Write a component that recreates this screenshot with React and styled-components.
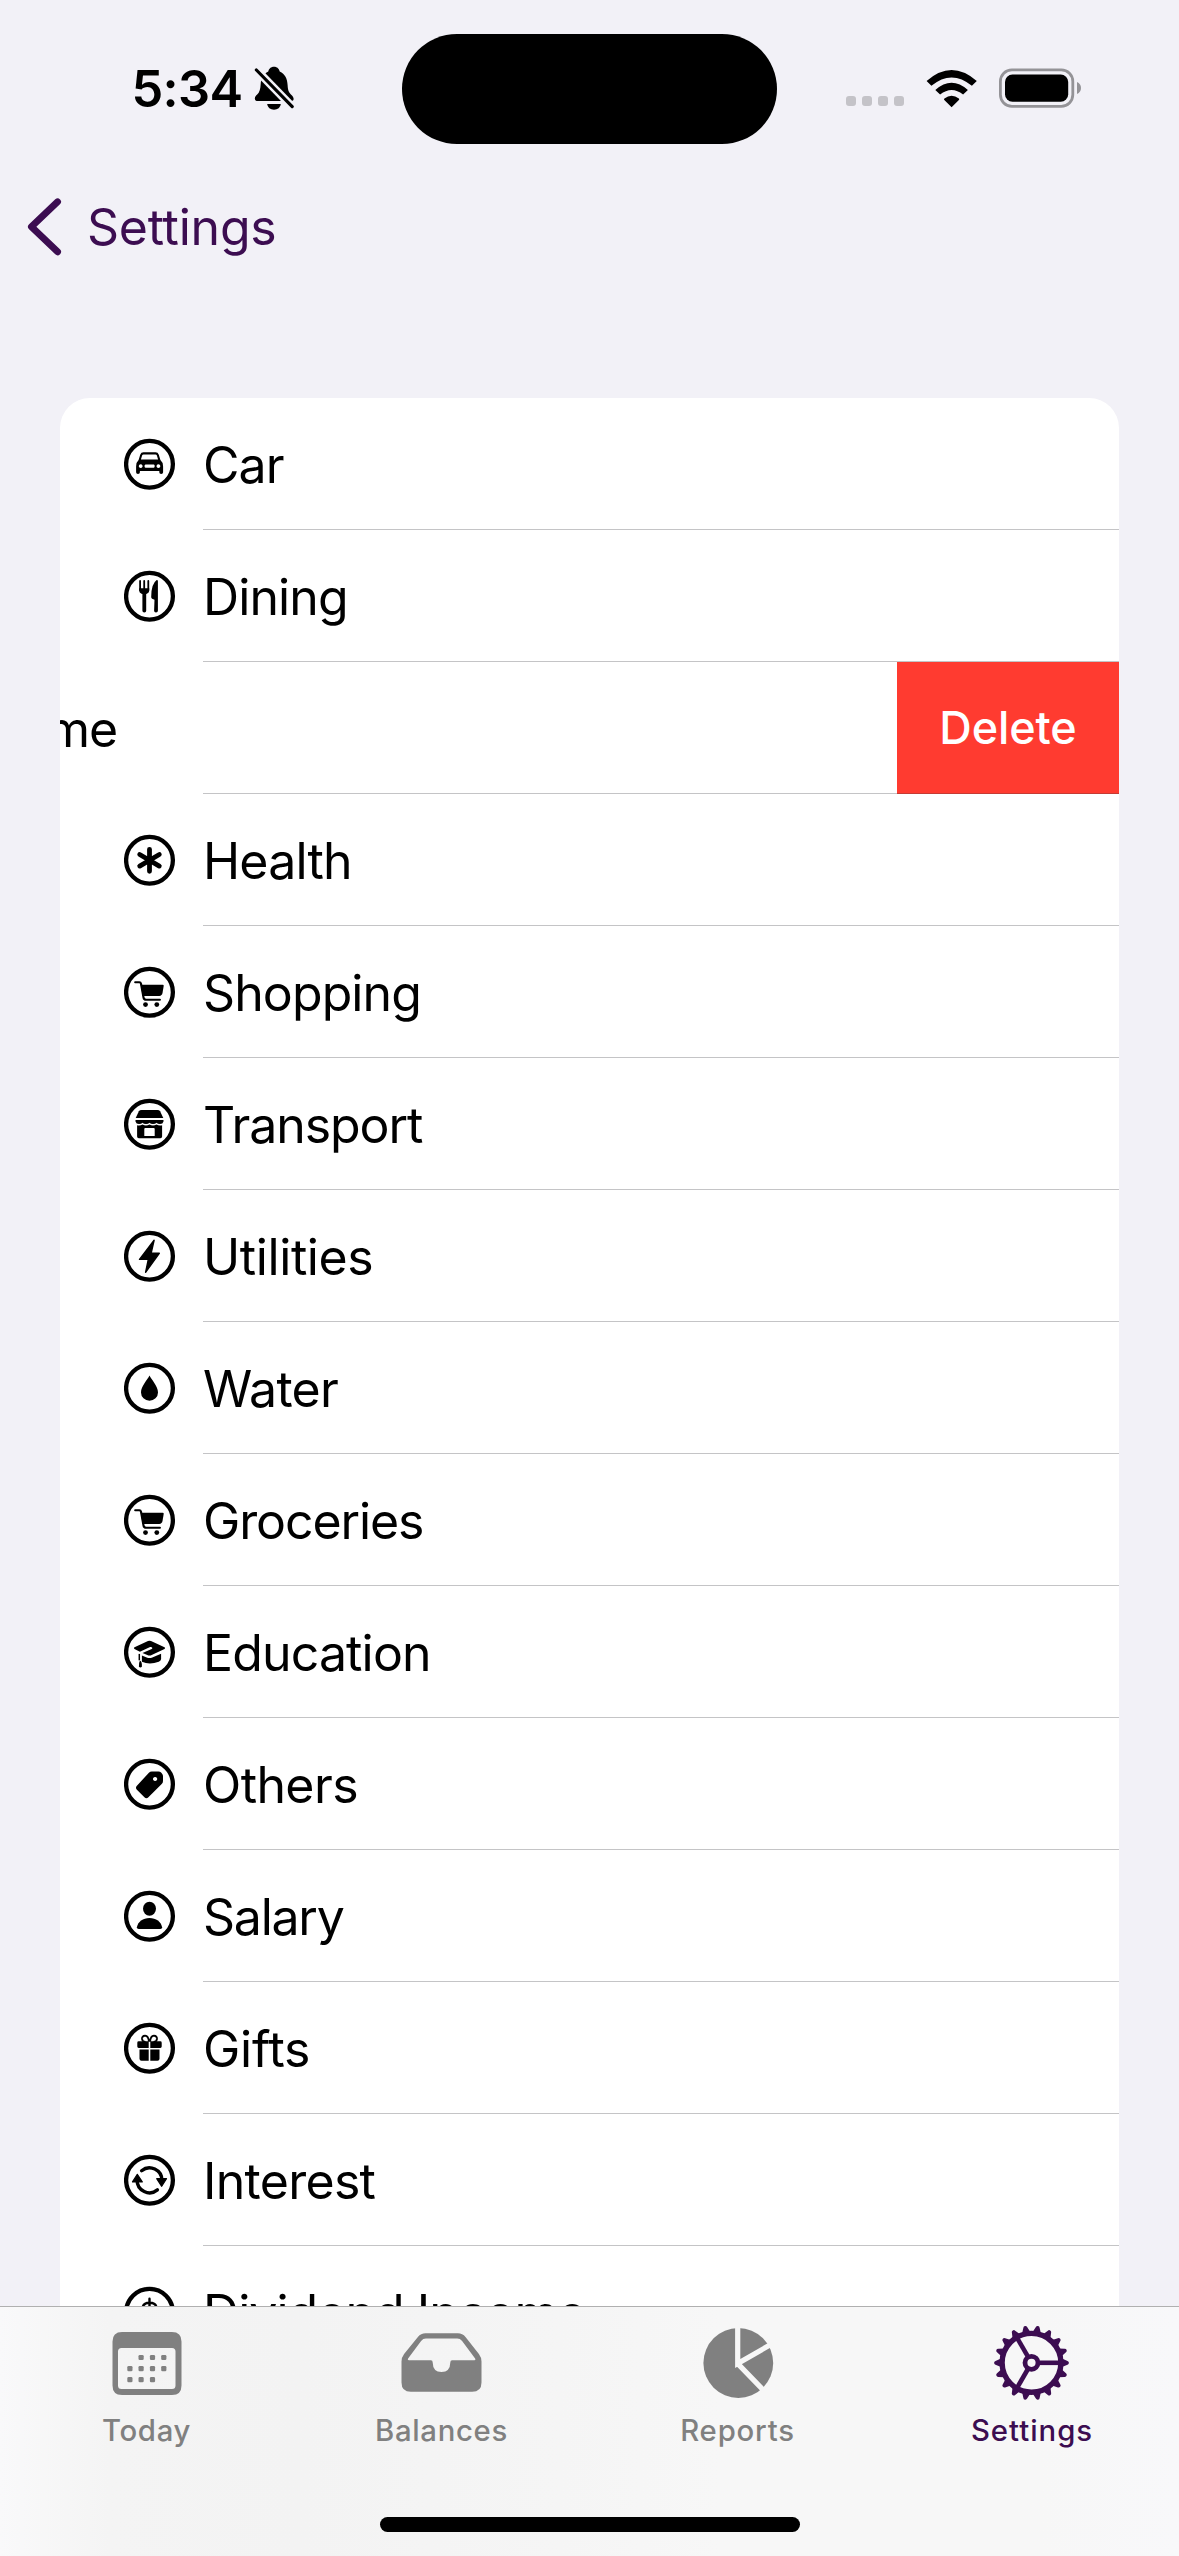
import React from 'react';
import styled, { createGlobalStyle } from 'styled-components';

const PURPLE = '#3c0d51';
const GREY = '#808080';

const GlobalStyle = createGlobalStyle`
  *, *::before, *::after { box-sizing: border-box; }
  html, body { margin: 0; padding: 0; }
  body {
    background: #f2f1f7;
    font-family: Inter, Roboto, "Liberation Sans", sans-serif;
    color: #000;
  }
  svg { display: block; }
`;

const Screen = styled.div`
  width: 1179px;
  height: 2556px;
  display: flex;
  flex-direction: column;
  overflow: hidden;
  background: #f2f1f7;
`;

const StatusBar = styled.header`
  flex: none;
  height: 177px;
  padding-top: 34px;
  display: grid;
  grid-template-columns: 402px 375px 402px;
  align-items: start;
`;

const StatusLeft = styled.div`
  display: flex;
  align-items: center;
  height: 110px;
  padding-left: 131.5px;
`;

const Time = styled.span`
  width: 122.5px;
  flex: none;
  font-size: 50.5px;
  font-weight: 600;
  letter-spacing: -0.7px;
  line-height: 60px;
  white-space: nowrap;
`;

const Island = styled.div`
  height: 110px;
  border-radius: 55px;
  background: #000;
`;

const StatusRight = styled.div`
  display: flex;
  align-items: center;
  height: 110px;
  padding-left: 69px;
`;

const Dots = styled.div`
  display: flex;
  gap: 6px;
  margin: 24px 22px 0 0;
`;

const Dot = styled.i`
  width: 10px;
  height: 10px;
  border-radius: 3px;
  background: #c4c3c8;
`;

const WifiSvg = styled.svg`
  margin-top: -3px;
`;

const BatterySvg = styled.svg`
  margin: -2px 0 0 21px;
`;

const NavBar = styled.nav`
  flex: none;
  height: 221px;
  padding-left: 25px;
  display: flex;
  align-items: flex-start;
`;

const BackButton = styled.button`
  display: flex;
  align-items: center;
  gap: 22px;
  height: 100px;
  border: 0;
  padding: 0;
  background: none;
  font: inherit;
  color: ${PURPLE};
`;

const BackLabel = styled.span`
  font-size: 50px;
  line-height: 60px;
  letter-spacing: -0.25px;
`;

const ListArea = styled.main`
  flex: 1;
  min-height: 0;
  overflow: hidden;
  padding: 0 60px;
`;

const Card = styled.ul`
  list-style: none;
  margin: 0;
  padding: 0;
  background: #fff;
  border-radius: 30px 30px 0 0;
  overflow: hidden;
`;

const Row = styled.li`
  position: relative;
  display: flex;
  height: 132px;
  &::after {
    content: '';
    position: absolute;
    left: 143px;
    right: 0;
    bottom: 0;
    height: 1px;
    background: rgba(60, 60, 67, 0.3);
  }
`;

const RowContent = styled.div`
  flex: none;
  width: 1059px;
  margin-left: ${(p) => (p.$swiped ? '-222px' : '0')};
  padding-left: 64px;
  display: flex;
  align-items: center;
  gap: 27px;
`;

const IconSvg = styled.svg`
  flex: none;
`;

const RowLabel = styled.span`
  padding-top: 2px;
  font-size: 50px;
  line-height: 60px;
  letter-spacing: ${(p) => p.$tracking}px;
  white-space: nowrap;
`;

const DeleteButton = styled.button`
  flex: none;
  width: 222px;
  border: 0;
  padding: 0 0 2px;
  background: #ff3b30;
  color: #fff;
  font: inherit;
  font-size: 45px;
  font-weight: 450;
  letter-spacing: -0.1px;
`;

const TabBar = styled.footer`
  flex: none;
  height: 250px;
  border-top: 1px solid #b0b0b0;
  background: linear-gradient(90deg, #f9f9fa 0, #f4f4f4 110px, #f3f3f3 300px, #f5f5f5 560px, #f7f7f7 720px, #f7f7f7 1040px, #f8f8fa 1179px);
  display: flex;
  flex-direction: column;
  align-items: center;
`;

const Tabs = styled.div`
  width: 100%;
  height: 210px;
  display: grid;
  grid-template-columns: 293px 297px 295px 294px;
`;

const Tab = styled.div`
  display: flex;
  flex-direction: column;
  align-items: center;
  padding-top: 17px;
  color: ${(p) => (p.$active ? PURPLE : GREY)};
`;

const TabLabel = styled.span`
  margin-top: 11px;
  font-size: 29.3px;
  line-height: 36px;
  font-weight: 500;
  letter-spacing: ${(p) => p.$tracking}px;
`;

const HomeIndicator = styled.div`
  width: 420px;
  height: 15px;
  border-radius: 8px;
  background: #000;
`;

const Cart = () => (
  <g>
    <path d="M-14.3-10h4.2q1.3 0 1.6 1.4L-6 5.2q.4 2.3 2.6 2.3H10.4" fill="none" stroke="#000" strokeWidth="2.1" strokeLinecap="round" />
    <path d="M-8.8-7.5H13.2q1.2 0 1 1.2L13 .8Q12.5 3.6 9.8 3.6H-6.8z" />
    <circle cx="-4" cy="12.3" r="2.4" />
    <circle cx="7.3" cy="12.3" r="2.4" />
  </g>
);

const glyphs = {
  car: (
    <path
      fillRule="evenodd"
      d="M-13.4 2.2Q-13.4-2-10.9-4.2L-9.3-9.6Q-8.5-12-6-12H6Q8.5-12 9.3-9.6L10.9-4.2Q13.6-2 13.6 2.2V8Q13.6 9.7 11.7 9.7T9.8 8V6.6H-9.6V8Q-9.6 9.7-11.5 9.7T-13.4 8ZM-8.6-4.7H8.6L7.3-9Q7-9.8 6-9.8H-6Q-7-9.8-7.3-9ZM-8.8-.1a1.9 1.9 0 1 0 .01 0ZM8.9-.1a1.9 1.9 0 1 0 .01 0ZM-4 .3Q-5 .3-5 1.8T-4 3.4H4.2Q5.2 3.4 5.2 1.8T4.2 .3Z"
    />
  ),
  dining: (
    <g>
      <path d="M-9.4-15.3V-6M-5.3-15.3V-6M-1.2-15.3V-6" stroke="#000" strokeWidth="1.8" strokeLinecap="round" />
      <path d="M-10.3-8H-.3V-5.5Q-.3-3.3-2.6-2.6L-3.3-2.2V14.5Q-3.3 16.2-5.2 16.2T-7.1 14.5V-2.2L-8-2.6Q-10.3-3.3-10.3-5.5Z" />
      <path d="M7.2-16.2Q8.4-16.4 8.4-15V14.5Q8.4 16.2 6.5 16.2T4.6 14.5L5 3.5 2.6 2.4Q1.7 2 1.7.8 1.7-12.5 7.2-16.2Z" />
    </g>
  ),
  health: <path d="M0-11V11M-9.8-5.8 9.8 5.8M-9.8 5.8 9.8-5.8" stroke="#000" strokeWidth="4.8" strokeLinecap="round" />,
  cart: <Cart />,
  store: (
    <g>
      <path d="M-8-14.3H8Q9.8-14.3 10.6-13L13.8-6.2H-13.8L-10.6-13Q-9.8-14.3-8-14.3Z" />
      <path d="M-14-4.4H14V-2.8Q13.4-.3 10.5-.3 8.2-.3 7-1.6 5.8-.3 3.5-.3T0-1.6Q-1.2-.3-3.5-.3T-7-1.6Q-8.2-.3-10.5-.3-13.4-.3-14-2.8Z" />
      <path fillRule="evenodd" d="M-12.4 1Q-9.3 1.6-7 .3-3.5 2.2 0 .3 3.5 2.2 7 .3 9.3 1.6 12.6 1V12.3Q12.6 14 10.9 14H-10.7Q-12.4 14-12.4 12.3ZM-5.2 4.6V11.8H5.2V4.6Q5.2 3.7 4.2 3.7H-4.2Q-5.2 3.7-5.2 4.6Z" />
    </g>
  ),
  bolt: <path d="M4.6-16 1.6-3H9.8L-3.9 16-1.2 3.1H-10Z" stroke="#000" strokeWidth="1.4" strokeLinejoin="round" />,
  drop: <path d="M0-12.7C2 -8.6 8.5-2 8.5 4.2A8.5 8.2 0 0 1-8.5 4.2C-8.5-2-2-8.6 0-12.7Z" />,
  education: (
    <g>
      <path d="M-1.5-11.3Q0-12 1.5-11.3L15-5Q16.4-4.2 15-3.4L2.2 2.6Q0 3.6-2.2 2.6L-7 .7 2.2-3.2Q3.2-3.8 2.6-4.8 1.8-5.6.6-5.2L-9.6-.6-15-3.4Q-16.4-4.2-15-5Z" />
      <path d="M-7.6 3.1-2.8 5.2Q0 6.4 2.8 5.2L11.6 1.4V6.8Q11.6 8.6 9.3 9.5 0 12.8-7.6 9.5Z" />
      <path d="M-10.2 1.6V8" stroke="#000" strokeWidth="1.5" />
      <path d="M-9.6 8.2Q-7.4 9-7.6 14.5-9.2 16-10.6 14.5-10.8 10.5-9.6 8.2Z" />
    </g>
  ),
  tag: <path fillRule="evenodd" d="M2.4-12.8H9Q10.5-12.8 11.6-11.7L12.4-10.9Q13.5-9.8 13.5-8.3V-3.4Q13.5-1.6 12.2-.3L-1.1 13Q-3.1 14.9-5.1 13L-12.6 5.4Q-14.5 3.4-12.6 1.4L-.6-11.5Q.6-12.8 2.4-12.8ZM5.6-7.4a2.1 2.1 0 1 0 .01 0Z" />,
  person: (
    <g>
      <ellipse cx="0" cy="-7.6" rx="6.5" ry="7" />
      <path d="M-10.8 12.8Q-12.8 12.8-12.6 11C-11.8 5.4-6.4 1.6 0 1.6S11.8 5.4 12.6 11Q12.8 12.8 10.8 12.8Z" />
    </g>
  ),
  gift: (
    <g>
      <path d="M-.6-6.5Q-1-12.4-4.4-12.6-7.6-12.4-7.5-9.4-7.2-6.5-4-6.3M.6-6.5Q1-12.4 4.4-12.6 7.6-12.4 7.5-9.4 7.2-6.5 4-6.3" fill="none" stroke="#000" strokeWidth="1.8" />
      <path d="M-10.8-7H-.8V-.4H-10.8Q-12.2-.4-12.2-1.8V-5.6Q-12.2-7-10.8-7ZM10.8-7H.8V-.4H10.8Q12.2-.4 12.2-1.8V-5.6Q12.2-7 10.8-7ZM-10 1.2H-.8V12.4H-8Q-10 12.4-10 10.4ZM10 1.2H.8V12.4H8Q10 12.4 10 10.4Z" />
    </g>
  ),
  cycle: (
    <g>
      <path d="M-7.9-9.6A12.4 12.4 0 0 1 12.4 0M7.9 9.6A12.4 12.4 0 0 1-12.4 0" fill="none" stroke="#000" strokeWidth="3.4" strokeLinecap="round" />
      <path d="M7.2-1.6H17L12.2 6Z M-7.2 1.6H-17L-12.2-6Z" stroke="#000" strokeWidth="1.2" strokeLinejoin="round" />
    </g>
  ),
  dollar: <path d="M0-13.5V13.5M6.8-5.5Q6-9.6 0-9.6T-6.8-5Q-6.8-1.4 0-.2 7.2 1 7.2 5T0 9.8Q-6.4 9.8-7 5" fill="none" stroke="#000" strokeWidth="2.4" strokeLinecap="round" />,
};

const CategoryIcon = ({ name }) => (
  <IconSvg width="52" height="52" viewBox="-25.5 -26.3 52 52">
    <circle cx="0" cy="0" r="23.4" fill="none" stroke="#000" strokeWidth="4.3" />
    {glyphs[name]}
  </IconSvg>
);

const BellSlash = () => (
  <svg width="40" height="46" viewBox="254 66 40 46">
    <defs>
      <mask id="bell-cut" maskUnits="userSpaceOnUse" x="250" y="60" width="50" height="55">
        <rect x="250" y="60" width="50" height="55" fill="#fff" />
        <path d="M252 65.4 297 111.6" stroke="#000" strokeWidth="8.2" />
      </mask>
    </defs>
    <g mask="url(#bell-cut)">
      <path d="M274 66.7C277.2 66.7 279.4 68.9 279.7 71.6 285 74 287.3 78.8 287.6 85 287.9 91 289 92.5 292 95.6 293.5 97.2 294 99 293.4 99.9 293 100.6 292 101 291 101H258C256 101 254.7 100 254.8 98.4 254.9 97 256 95.7 257.2 94.6 259.6 92.3 260.4 89 260.7 84 261 78.5 263.3 74 268.3 71.6 268.6 68.9 270.8 66.7 274 66.7Z" />
      <path d="M267.2 104H280.8C280.4 107.5 277.6 109.7 274 109.7S267.6 107.5 267.2 104Z" />
    </g>
    <path d="M256.4 70 292.2 106.6" stroke="#000" strokeWidth="3.2" strokeLinecap="round" />
  </svg>
);

const Wifi = () => (
  <WifiSvg width="52" height="40" viewBox="926 67 52 40">
    <path d="M951.6 106.2 944.3 98.9Q943.6 98.2 944.4 97.6 951.6 91.8 958.9 97.6 959.6 98.2 958.9 98.9Z" />
    <path d="M935.3 88.9Q951.6 74.5 967.9 88.9L963.1 93.6Q951.6 84.4 940.1 93.6Z" />
    <path d="M926.6 80Q951.6 58 976.8 80L971.9 84.8Q951.6 68 931.4 84.8Z" />
  </WifiSvg>
);

const Battery = () => (
  <BatterySvg width="84" height="40" viewBox="999 67.5 84 40">
    <rect x="1000.4" y="69.4" width="72.4" height="36.4" rx="11.5" fill="none" stroke="#949397" strokeWidth="2.8" />
    <rect x="1005" y="74" width="63.2" height="27.2" rx="7.5" />
    <path d="M1077 81.5Q1081 83.4 1081 87.5T1077 93.5Z" fill="#949397" />
  </BatterySvg>
);

const calendarDots = [
  [140.6, 2357.5], [152, 2357.5], [163.3, 2357.5],
  [129.4, 2368.6], [140.6, 2368.6], [152, 2368.6], [163.3, 2368.6],
  [129.4, 2379.7], [140.6, 2379.7], [152, 2379.7],
];

const TodayIcon = () => (
  <svg width="78" height="78" viewBox="107.5 2324 78 78" fill={GREY}>
    <path fillRule="evenodd" d="M121.5 2332H171.5Q181 2332 181 2341.5V2385.5Q181 2395 171.5 2395H121.5Q112 2395 112 2385.5V2341.5Q112 2332 121.5 2332ZM121 2348Q117.5 2348 117.5 2351.5V2385.5Q117.5 2389 121 2389H171.5Q175 2389 175 2385.5V2351.5Q175 2348 171.5 2348Z" />
    {calendarDots.map(([x, y]) => (
      <rect key={`${x}-${y}`} x={x - 2.6} y={y - 2.6} width="5.2" height="5.2" rx="1.3" />
    ))}
  </svg>
);

const BalancesIcon = () => (
  <svg width="88" height="78" viewBox="397.5 2324 88 78" fill={GREY}>
    <path fillRule="evenodd" d="M425 2333.3H457.4Q462 2333.3 465 2337L478.4 2354Q481 2357.4 481 2361.5V2382.5Q481 2391.8 471.7 2391.8H410.3Q401 2391.8 401 2382.5V2361.5Q401 2357.4 403.6 2354L417.4 2337Q420.4 2333.3 425 2333.3ZM407.6 2358.6Q406.6 2360.2 408.4 2360.2H430.4Q432.2 2360.2 432.2 2362.4 432.4 2372 441 2372T449.8 2362.4Q449.8 2360.2 451.6 2360.2H474Q475.6 2360.2 474.6 2358.6L461.6 2341Q459.6 2338.6 456.8 2338.6H425.4Q422.6 2338.6 420.6 2341Z" />
  </svg>
);

const ReportsIcon = () => (
  <svg width="78" height="78" viewBox="698.5 2324 78 78">
    <defs>
      <mask id="pie-cut" maskUnits="userSpaceOnUse" x="698" y="2324" width="80" height="80">
        <rect x="698" y="2324" width="80" height="80" fill="#fff" />
        <path d="M737.2 2320V2363.6L775 2341.8M737.2 2363.6 768 2395.5" fill="none" stroke="#000" strokeWidth="5.2" />
      </mask>
    </defs>
    <circle cx="737.8" cy="2363" r="34.9" fill={GREY} mask="url(#pie-cut)" />
  </svg>
);

const SettingsIcon = () => (
  <svg width="78" height="78" viewBox="-38.5 -38.8 78 78" fill="none" stroke={PURPLE}>
    <circle r="29.4" strokeWidth="5.4" />
    <circle r="6.5" strokeWidth="4.8" />
    {[0, 120, 240].map((a) => (
      <path key={a} d="M8 0H28" strokeWidth="4.6" transform={`rotate(${a})`} />
    ))}
    {Array.from({ length: 18 }, (_, i) => (
      <path key={i} d="M30.5-4.2 36-1.9Q37.4-1.5 37.4 0T36 1.9L30.5 4.2Z" fill={PURPLE} stroke="none" transform={`rotate(${i * 20})`} />
    ))}
  </svg>
);

const categories = [
  { label: 'Car', icon: 'car', tracking: -0.9 },
  { label: 'Dining', icon: 'dining', tracking: -0.9 },
  { label: 'Home', icon: 'store', tracking: -1, swiped: true },
  { label: 'Health', icon: 'health', tracking: -0.8 },
  { label: 'Shopping', icon: 'cart', tracking: -0.9 },
  { label: 'Transport', icon: 'store', tracking: -1.05 },
  { label: 'Utilities', icon: 'bolt', tracking: -0.4 },
  { label: 'Water', icon: 'drop', tracking: -0.7 },
  { label: 'Groceries', icon: 'cart', tracking: -1.1 },
  { label: 'Education', icon: 'education', tracking: -0.85 },
  { label: 'Others', icon: 'tag', tracking: -0.6 },
  { label: 'Salary', icon: 'person', tracking: -1.25 },
  { label: 'Gifts', icon: 'gift', tracking: -0.25 },
  { label: 'Interest', icon: 'cycle', tracking: -0.7 },
  { label: 'Dividend Income', icon: 'dollar', tracking: -0.95 },
];

const tabs = [
  { label: 'Today', Icon: TodayIcon, tracking: 0.7 },
  { label: 'Balances', Icon: BalancesIcon, tracking: 0.7 },
  { label: 'Reports', Icon: ReportsIcon, tracking: 0.8 },
  { label: 'Settings', Icon: SettingsIcon, tracking: 1, active: true },
];

export default function App() {
  return (
    <Screen>
      <GlobalStyle />
      <StatusBar>
        <StatusLeft>
          <Time>5:34</Time>
          <BellSlash />
        </StatusLeft>
        <Island />
        <StatusRight>
          <Dots>
            <Dot /><Dot /><Dot /><Dot />
          </Dots>
          <Wifi />
          <Battery />
        </StatusRight>
      </StatusBar>
      <NavBar>
        <BackButton>
          <svg width="40" height="60" viewBox="25 197 40 60" fill="none" stroke={PURPLE} strokeWidth="6.8" strokeLinecap="round" strokeLinejoin="round">
            <path d="M57.6 201.8 31.4 226.7 57.6 251.8" />
          </svg>
          <BackLabel>Settings</BackLabel>
        </BackButton>
      </NavBar>
      <ListArea>
        <Card>
          {categories.map((c) => (
            <Row key={c.label}>
              <RowContent $swiped={c.swiped}>
                <CategoryIcon name={c.icon} />
                <RowLabel $tracking={c.tracking}>{c.label}</RowLabel>
              </RowContent>
              {c.swiped && <DeleteButton>Delete</DeleteButton>}
            </Row>
          ))}
        </Card>
      </ListArea>
      <TabBar>
        <Tabs>
          {tabs.map(({ label, Icon, tracking, active }) => (
            <Tab key={label} $active={active}>
              <Icon />
              <TabLabel $tracking={tracking}>{label}</TabLabel>
            </Tab>
          ))}
        </Tabs>
        <HomeIndicator />
      </TabBar>
    </Screen>
  );
}
